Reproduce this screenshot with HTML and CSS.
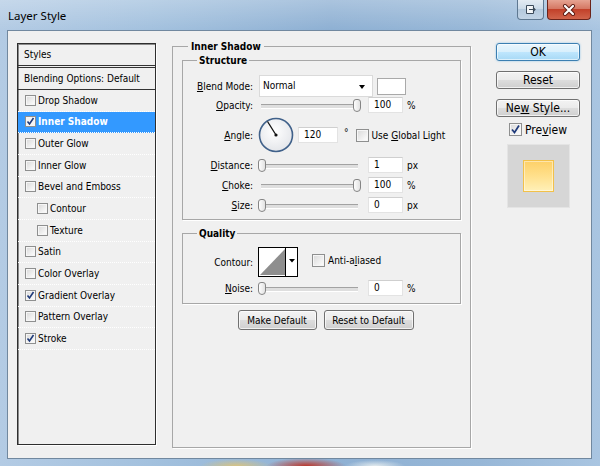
FILE: index.html
```html
<!DOCTYPE html>
<html lang="en">
<head>
  <meta charset="utf-8" />
  <title>Layer Style</title>
  <link rel="stylesheet" href="styles.css">
</head>
<body>
  <div class="window">
    <div class="titlebar">
      <span class="title">Layer Style</span>
      <div class="caption-btns">
        <span class="cap-btn cap-dock">
          <svg width="12" height="11" viewBox="0 0 12 11"><path d="M1.5 1.5h7v8h-7z" fill="#f4f6f8" stroke="#3b4a5a"/><path d="M4 5.5h6M8 3.5l2 2-2 2" fill="none" stroke="#3b4a5a" stroke-width="1.2"/></svg>
        </span>
        <span class="cap-btn cap-close">
          <svg width="14" height="12" viewBox="0 0 14 12"><path d="M3 2l8 8M11 2l-8 8" stroke="#5a1a12" stroke-width="4" stroke-linecap="round"/><path d="M3 2l8 8M11 2l-8 8" stroke="#fff" stroke-width="2.2" stroke-linecap="round"/></svg>
        </span>
      </div>
    </div>

    <div class="client">
      <div class="styles-list">
        <div class="list-head">Styles</div>
        <div class="list-head blending">Blending Options: Default</div>
        <div class="item"><span class="cb"></span>Drop Shadow</div>
        <div class="item selected"><span class="cb"><svg width="9" height="9" viewBox="0 0 9 9"><path d="M1.5 4.5l2 2.5 4-6" fill="none" stroke="#1f3a7a" stroke-width="1.6"/></svg></span>Inner Shadow</div>
        <div class="item"><span class="cb"></span>Outer Glow</div>
        <div class="item"><span class="cb"></span>Inner Glow</div>
        <div class="item"><span class="cb"></span>Bevel and Emboss</div>
        <div class="item sub"><span class="cb"></span>Contour</div>
        <div class="item sub"><span class="cb"></span>Texture</div>
        <div class="item"><span class="cb"></span>Satin</div>
        <div class="item"><span class="cb"></span>Color Overlay</div>
        <div class="item"><span class="cb"><svg width="9" height="9" viewBox="0 0 9 9"><path d="M1.5 4.5l2 2.5 4-6" fill="none" stroke="#1f3a7a" stroke-width="1.6"/></svg></span>Gradient Overlay</div>
        <div class="item"><span class="cb"></span>Pattern Overlay</div>
        <div class="item"><span class="cb"><svg width="9" height="9" viewBox="0 0 9 9"><path d="M1.5 4.5l2 2.5 4-6" fill="none" stroke="#1f3a7a" stroke-width="1.6"/></svg></span>Stroke</div>
      </div>

      <fieldset class="group main-group">
        <legend>Inner Shadow</legend>

        <fieldset class="group sub-group structure">
          <legend>Structure</legend>

          <div class="row blend-row">
            <span class="label"><u>B</u>lend Mode:</span>
            <div class="select">Normal<span class="arrow"></span></div>
            <span class="swatch"></span>
          </div>

          <div class="row">
            <span class="label"><u>O</u>pacity:</span>
            <div class="slider"><span class="thumb at-end"></span></div>
            <span class="field">100</span>
            <span class="unit">%</span>
          </div>

          <div class="row angle-row">
            <span class="label"><u>A</u>ngle:</span>
            <svg class="dial" width="36" height="36" viewBox="0 0 36 36">
              <defs>
                <radialGradient id="dialfill" cx="0.45" cy="0.4" r="0.6">
                  <stop offset="0" stop-color="#ffffff"/>
                  <stop offset="1" stop-color="#e4e6ea"/>
                </radialGradient>
              </defs>
              <circle cx="18" cy="18" r="16.5" fill="url(#dialfill)" stroke="#40618a" stroke-width="1.6"/>
              <line x1="18" y1="18" x2="9.5" y2="4.5" stroke="#111" stroke-width="1.3"/>
              <circle cx="18" cy="18" r="1.6" fill="#111"/>
            </svg>
            <span class="field wide">120</span>
            <span class="degree">°</span>
            <span class="cb big"></span>
            <span class="cb-label">Use <u>G</u>lobal Light</span>
          </div>

          <div class="row">
            <span class="label"><u>D</u>istance:</span>
            <div class="slider"><span class="thumb"></span></div>
            <span class="field">1</span>
            <span class="unit">px</span>
          </div>

          <div class="row">
            <span class="label"><u>C</u>hoke:</span>
            <div class="slider"><span class="thumb at-end"></span></div>
            <span class="field">100</span>
            <span class="unit">%</span>
          </div>

          <div class="row">
            <span class="label"><u>S</u>ize:</span>
            <div class="slider"><span class="thumb"></span></div>
            <span class="field">0</span>
            <span class="unit">px</span>
          </div>
        </fieldset>

        <fieldset class="group sub-group quality">
          <legend>Quality</legend>

          <div class="row contour-row">
            <span class="label">Contour:</span>
            <svg class="contour" width="40" height="30" viewBox="0 0 40 30">
              <rect x="0.5" y="0.5" width="39" height="29" fill="#fff" stroke="#000"/>
              <polygon points="2,28 27,2 27,28" fill="#8e8e8e"/>
              <line x1="27.5" y1="0" x2="27.5" y2="30" stroke="#000"/>
              <polygon points="31,12 37,12 34,15.5" fill="#000"/>
            </svg>
            <span class="cb big"></span>
            <span class="cb-label">Anti-a<u>l</u>iased</span>
          </div>

          <div class="row">
            <span class="label"><u>N</u>oise:</span>
            <div class="slider"><span class="thumb"></span></div>
            <span class="field">0</span>
            <span class="unit">%</span>
          </div>
        </fieldset>

        <div class="default-btns">
          <span class="btn make">Make Default</span>
          <span class="btn reset-def">Reset to Default</span>
        </div>
      </fieldset>

      <div class="side">
        <span class="btn side-btn primary">OK</span>
        <span class="btn side-btn">Reset</span>
        <span class="btn side-btn"><span>Ne<u>w</u> Style...</span></span>
        <div class="preview-check">
          <span class="cb big"><svg width="11" height="11" viewBox="0 0 11 11"><path d="M2 5.5l2.5 3 4.5-7" fill="none" stroke="#1f3a7a" stroke-width="1.7"/></svg></span>
          <span>Pre<u>v</u>iew</span>
        </div>
        <div class="preview">
          <span class="preview-swatch"></span>
        </div>
      </div>
    </div>
  </div>
</body>
</html>
```

FILE: styles.css
```css
* {
  box-sizing: border-box;
}

body {
  margin: 0;
  width: 600px;
  height: 466px;
  overflow: hidden;
  font-family: "DejaVu Sans Condensed", "DejaVu Sans", sans-serif;
  font-stretch: condensed;
  font-size: 10px;
  color: #000;
}

.window {
  width: 600px;
  height: 466px;
  display: flex;
  flex-direction: column;
  background:
    radial-gradient(ellipse 36px 7px at 236px 466px, rgba(222, 196, 120, 0.9), transparent),
    radial-gradient(ellipse 40px 8px at 306px 466px, rgba(190, 50, 36, 0.95), transparent),
    radial-gradient(ellipse 30px 6px at 375px 466px, rgba(235, 240, 240, 0.9), transparent),
    linear-gradient(180deg, rgba(255, 255, 255, 0.25), rgba(255, 255, 255, 0) 30px),
    linear-gradient(90deg, #b3cbe4 0%, #a3c1de 25%, #8eb0d3 55%, #97b7d7 80%, #a9c5e1 100%);
}

/* title bar */

.titlebar {
  height: 30px;
  display: flex;
  align-items: flex-start;
  padding-left: 8px;
}

.title {
  font-family: "Noto Sans", sans-serif;
  font-stretch: normal;
  font-size: 11.5px;
  margin-top: 8px;
}

.caption-btns {
  margin-left: auto;
  margin-right: 9px;
  display: flex;
  gap: 3px;
}

.cap-btn {
  height: 20px;
  display: flex;
  align-items: center;
  justify-content: center;
  border: 1px solid #5e7891;
  border-top: none;
  border-radius: 0 0 4px 4px;
}

.cap-dock {
  width: 27px;
  background: linear-gradient(180deg, #e3ebf3 0%, #ccdbe9 45%, #b4c9dd 50%, #c2d4e6 100%);
}

.cap-close {
  width: 44px;
  border-color: #6b231a;
  background: linear-gradient(180deg, #e6a392 0%, #d57864 45%, #c2412a 50%, #d0644b 100%);
}

/* client area */

.client {
  flex: 1;
  margin: 0 8px 7px 7px;
  background: #f0f0f0;
  border: 1px solid #71889f;
  display: grid;
  grid-template-columns: 139px 315px 109px;
  align-items: start;
  padding-left: 9px;
}

/* styles list */

.styles-list {
  margin-top: 12px;
  height: 402px;
  border: 1px solid #2e2e2e;
  box-shadow: inset 1px 1px 0 #8a8a8a, 1px 1px 0 #fff;
}

.list-head {
  height: 22px;
  line-height: 21px;
  padding-left: 6px;
  border-bottom: 1px solid #333;
}

.list-head.blending {
  height: 23px;
  margin-top: 1px;
  border-top: 1px solid #333;
}

.item {
  height: 21.67px;
  display: flex;
  align-items: center;
  padding-left: 7px;
  border-bottom: 1px dotted #fff;
}

.item.sub {
  padding-left: 19px;
}

.item.selected {
  background: #3399ff;
  color: #fff;
  font-weight: bold;
}

.cb {
  width: 11px;
  height: 11px;
  flex: none;
  margin-right: 2px;
  display: inline-flex;
  align-items: center;
  justify-content: center;
  border: 1px solid #8e8f8f;
  background: linear-gradient(135deg, #d8d8d8 0%, #f4f4f4 70%, #fff 100%);
  box-shadow: inset 0 0 0 1px #f6f6f6;
}

.selected .cb {
  background: #f4f4f4;
}

.cb.big {
  width: 13px;
  height: 13px;
}

/* effect settings */

.group {
  margin: 0;
  border: 1px solid #a7a7a7;
  box-shadow: 1px 1px 0 #fff;
  min-inline-size: 0;
}

.group legend {
  font-weight: bold;
  line-height: 13px;
  padding: 0 3px;
}

.main-group {
  margin-top: 9px;
  margin-left: 16px;
  height: 408px;
  padding: 0 9px;
}

.main-group > legend {
  margin-left: 6px;
}

.sub-group {
  padding: 0;
}

.sub-group > legend {
  margin-left: 14px;
  padding: 0 2px;
}

.structure {
  margin-top: 1px;
  padding-bottom: 6px;
}

.quality {
  margin-top: 7px;
  padding-bottom: 7px;
}

.row {
  display: flex;
  align-items: center;
  height: 16px;
  margin-top: 4px;
  white-space: nowrap;
}

.label {
  width: 70px;
  flex: none;
  text-align: right;
}

.blend-row {
  height: 22px;
  margin-top: 8px;
}

.structure .blend-row + .row {
  margin-top: 0;
}

.select {
  position: relative;
  width: 114px;
  height: 22px;
  margin-left: 6px;
  padding-left: 3px;
  line-height: 20px;
  background: #fff;
  border: 1px solid #dadada;
}

.arrow {
  position: absolute;
  right: 7px;
  top: 9px;
  border-left: 3.5px solid transparent;
  border-right: 3.5px solid transparent;
  border-top: 4px solid #000;
}

.swatch {
  width: 29px;
  height: 17px;
  margin-left: 4px;
  background: #fff;
  border: 1px solid #a9a9a9;
}

.slider {
  position: relative;
  width: 104px;
  height: 16px;
  margin-left: 5px;
}

.slider::before {
  content: "";
  position: absolute;
  left: 3px;
  right: 4px;
  top: 7px;
  height: 3px;
  background: #dedede;
  border-top: 1px solid #a2a2a2;
  border-bottom: 1px solid #fff;
}

.thumb {
  position: absolute;
  left: 0;
  top: 2px;
  width: 8px;
  height: 13px;
  border: 1px solid #858585;
  border-radius: 3px 3px 4px 4px;
  background: linear-gradient(90deg, #fdfdfd, #e2e2e2);
}

.thumb.at-end {
  left: auto;
  right: 1px;
}

.field {
  width: 35px;
  height: 16px;
  flex: none;
  margin-left: 6px;
  padding-left: 5px;
  line-height: 14px;
  background: #fff;
  border: 1px solid #e3e3e3;
  border-top-color: #cfcfcf;
}

.unit {
  margin-left: 4px;
}

.angle-row {
  height: 36px;
}

.dial {
  margin-left: 5px;
  flex: none;
}

.field.wide {
  width: 40px;
  margin-left: 4px;
}

.degree {
  margin-left: 6px;
  margin-top: -5px;
}

.angle-row .cb {
  margin-left: 7px;
}

.cb-label {
  margin-left: 1px;
}

.contour-row {
  height: 30px;
  margin-top: 7px;
}

.contour {
  margin-left: 5px;
  flex: none;
}

.contour-row .cb {
  margin-left: 14px;
  margin-top: -4px;
}

.contour-row .cb-label {
  margin-top: -4px;
}

.quality .contour-row + .row {
  margin-top: 3px;
}

/* buttons */

.btn {
  display: flex;
  align-items: center;
  justify-content: center;
  white-space: nowrap;
  border: 1px solid #707070;
  border-radius: 3px;
  background: linear-gradient(180deg, #f3f3f3 0%, #ebebeb 48%, #dddddd 52%, #cfcfcf 100%);
  box-shadow: inset 0 0 0 1px rgba(255, 255, 255, 0.7);
}

.default-btns {
  display: flex;
  justify-content: center;
  gap: 7px;
  margin-top: 6px;
  padding-left: 8px;
}

.default-btns .btn {
  height: 20px;
}

.btn.make {
  width: 79px;
}

.btn.reset-def {
  width: 90px;
}

.side {
  margin-top: 12px;
  margin-left: 25px;
  display: flex;
  flex-direction: column;
  align-items: center;
  font-size: 12px;
}

.side-btn {
  width: 84px;
  height: 18px;
  margin-bottom: 10px;
}

.side-btn.primary {
  border-color: #3c7fb1;
  background: linear-gradient(180deg, #eaf6fd 0%, #d9f0fc 48%, #bee6fd 52%, #a7d9f5 100%);
  box-shadow: inset 0 0 0 1px rgba(255, 255, 255, 0.6), 0 0 2px rgba(60, 160, 230, 0.6);
}

.preview-check {
  display: flex;
  align-items: center;
  gap: 3px;
  height: 13px;
  margin-top: -4px;
}

.preview-check .cb {
  margin-right: 0;
}

.preview {
  width: 63px;
  height: 64px;
  margin-top: 8px;
  display: flex;
  align-items: center;
  justify-content: center;
  background: #d6d6d6;
  border: 1px solid #e4e4e4;
}

.preview-swatch {
  width: 31px;
  height: 32px;
  border: 1px solid #f2c14a;
  background: linear-gradient(180deg, #fdd068 0%, #ffe08c 50%, #fff0b8 100%);
  box-shadow: inset 0 0 0 1px rgba(255, 255, 255, 0.45);
}
```
